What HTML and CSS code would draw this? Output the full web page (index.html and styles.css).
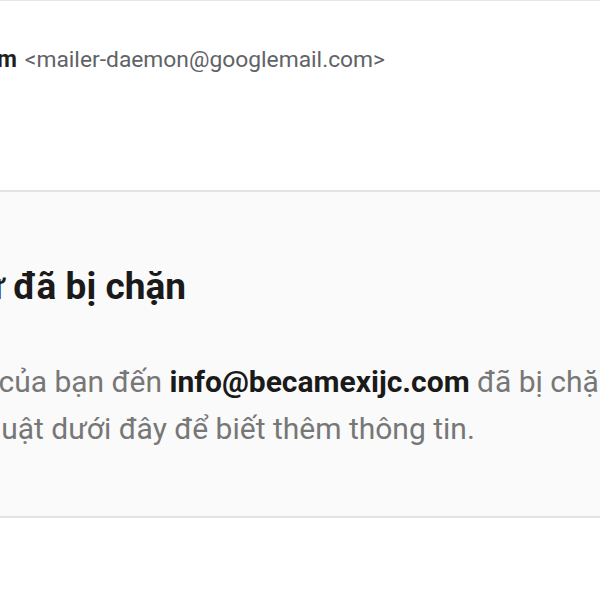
FILE: index.html
```html
<!DOCTYPE html>
<html lang="vi">
<head>
<meta charset="utf-8">
<title>Thư đã bị chặn</title>
<link rel="stylesheet" href="styles.css">
</head>
<body>
<div class="page">
  <div class="header">
    <span class="sender">Mail Delivery Subsystem</span>
    <span class="addr">&lt;mailer-daemon@googlemail.com&gt;</span>
  </div>
  <div class="notice">
    <div class="notice-inner">
      <h1 class="title">Thư đã bị chặn</h1>
      <p class="body-text">Thư của bạn đến <b class="strong">info@becamexijc.com</b> đã bị chặn. Hãy xem chi tiết kỹ thuật dưới đây để biết thêm thông tin.</p>
    </div>
  </div>
</div>
</body>
</html>
```
FILE: styles.css
```css
html, body {
  margin: 0;
  padding: 0;
  background: #ffffff;
  overflow: hidden;
}
body {
  font-family: Roboto, "Noto Sans", sans-serif;
  border-top: 1px solid #e6e6e6;
  width: 600px;
  height: 599px;
}
.page {
  display: flex;
  flex-direction: column;
  width: 1000px;
}
.header {
  display: flex;
  justify-content: flex-end;
  align-items: baseline;
  gap: 8px;
  width: 385px;
  padding-top: 45px;
  height: 189px;
  box-sizing: border-box;
  white-space: nowrap;
}
.sender {
  font-weight: 700;
  font-size: 23px;
  color: #1f1f1f;
}
.addr {
  font-size: 22.8px;
  color: #5f6368;
}
.notice {
  margin-left: -4px;
  width: 608px;
  background: #fafafa;
  border-top: 2px solid #e3e3e3;
  border-bottom: 2px solid #e3e3e3;
  height: 328px;
  box-sizing: border-box;
}
.notice-inner {
  margin-left: -58px;
  width: 915px;
  padding-top: 73px;
}
.title {
  margin: 0;
  font-size: 37px;
  font-weight: 700;
  color: #1a1a1a;
  line-height: 44px;
}
.body-text {
  margin: 49px 0 0;
  font-size: 30px;
  line-height: 47px;
  color: #777777;
}
.strong {
  font-weight: 700;
  color: #1a1a1a;
}
```
